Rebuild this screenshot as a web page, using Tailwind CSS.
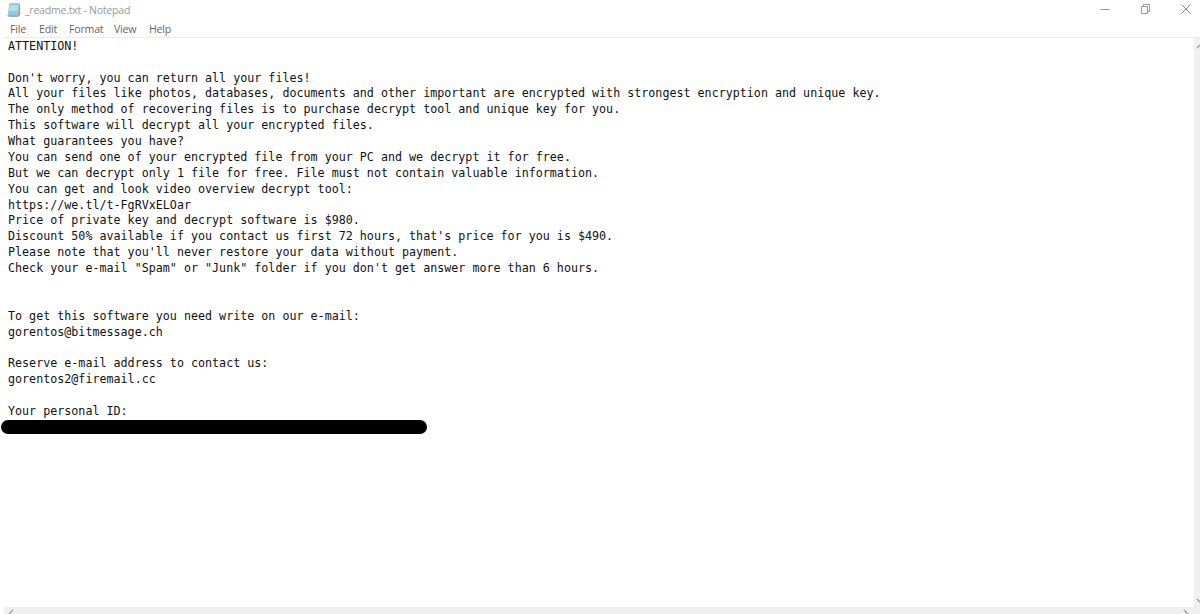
<!DOCTYPE html>
<html lang="en">
<head>
    <meta charset="UTF-8">
    <meta name="viewport" content="width=device-width, initial-scale=1.0">
    <title>_readme.txt - Notepad</title>
    <script src="https://cdn.jsdelivr.net/npm/@tailwindcss/browser@4"></script>
</head>
<body class="flex flex-col h-screen overflow-hidden bg-white font-['Open_Sans',sans-serif]">

    <!-- Title bar -->
    <header class="flex items-center justify-between h-5 pl-[7px] pr-[9px] shrink-0">
        <div class="flex items-center gap-[4px]">
            <svg class="w-[14px] h-[16px]" viewBox="0 0 14 16">
                <path d="M3 2 L13 2 L13.3 13 L11.5 14.8 L2 14.8 Z" fill="#a9a595"/>
                <path d="M2.5 1.5 H12.3 L10.8 14 H0.5 Z" fill="#8fcbdc"/>
                <path d="M3 3 H11.4 L10.6 9 H2.2 Z" fill="#b0deea"/>
                <path d="M2.5 1.7 H12.5" stroke="#9aa8ad" stroke-dasharray="1 1"/>
                <path d="M0.6 14 H10.8" stroke="#6c9db1" stroke-width="0.8"/>
            </svg>
            <span class="text-[10.6px] leading-5 tracking-[-0.27px] text-[#999] whitespace-nowrap">_readme.txt - Notepad</span>
        </div>
        <div class="flex items-center -mt-[2px]">
            <svg class="w-[10px] h-[10px] mr-[30px]" viewBox="0 0 10 10" fill="none" stroke="#999">
                <path d="M0.5 5.5 H9.5"/>
            </svg>
            <svg class="w-[10px] h-[10px] mr-[31px]" viewBox="0 0 10 10" fill="none" stroke="#999">
                <path d="M1.5 2.5 H7.5 V9.5 H1.5 Z M3.5 2.5 V0.5 H9.5 V7.5 H7.5"/>
            </svg>
            <svg class="w-[10px] h-[10px]" viewBox="0 0 10 10" fill="none" stroke="#888">
                <path d="M0.5 0.5 L9.5 9.5 M9.5 0.5 L0.5 9.5"/>
            </svg>
        </div>
    </header>

    <!-- Menu -->
    <nav class="flex h-[17px] pl-[10px] gap-[12px] text-[10.6px] leading-[18px] tracking-[-0.2px] text-[#666] shrink-0">
        <span class="w-[17px]">File</span>
        <span class="w-[18px]">Edit</span>
        <span class="w-[33px]">Format</span>
        <span class="w-[23px]">View</span>
        <span>Help</span>
    </nav>

    <!-- Text area and vertical scrollbar -->
    <div class="flex flex-1 min-h-0 ml-1 border-t border-[#ececec]">
        <main class="flex-1 pt-[0.8px] pl-1 font-['DejaVu_Sans_Mono',monospace] text-[11.7px] leading-[15.87px] text-[#111]">
<pre class="font-[inherit]">ATTENTION!

Don't worry, you can return all your files!
All your files like photos, databases, documents and other important are encrypted with strongest encryption and unique key.
The only method of recovering files is to purchase decrypt tool and unique key for you.
This software will decrypt all your encrypted files.
What guarantees you have?
You can send one of your encrypted file from your PC and we decrypt it for free.
But we can decrypt only 1 file for free. File must not contain valuable information.
You can get and look video overview decrypt tool:
https://we.tl/t-FgRVxELOar
Price of private key and decrypt software is $980.
Discount 50% available if you contact us first 72 hours, that's price for you is $490.
Please note that you'll never restore your data without payment.
Check your e-mail "Spam" or "Junk" folder if you don't get answer more than 6 hours.


To get this software you need write on our e-mail:
gorentos@bitmessage.ch

Reserve e-mail address to contact us:
gorentos2@firemail.cc

Your personal ID:
</pre>
            <div class="w-[426px] h-[14px] -ml-[7px] rounded-full bg-black"></div>
        </main>
        <div class="flex flex-col justify-between w-[6px] pt-[5px] pb-[3px] bg-[#f0f0f0] overflow-hidden">
            <svg class="w-[6px] h-[6px]" viewBox="0 0 6 6" fill="none" stroke="#a0a0a0" stroke-width="1.4">
                <path d="M3 5 L6.5 1.5"/>
            </svg>
            <svg class="w-[6px] h-[6px]" viewBox="0 0 6 6" fill="none" stroke="#a0a0a0" stroke-width="1.4">
                <path d="M3 1 L6.5 4.5"/>
            </svg>
        </div>
    </div>

    <!-- Horizontal scrollbar, cut off by the window edge -->
    <footer class="flex items-end justify-between h-[7px] ml-1 pl-[4px] pr-[11px] bg-[#f0f0f0] shrink-0">
        <svg class="w-[6px] h-[5px]" viewBox="0 0 6 5" fill="none" stroke="#a0a0a0" stroke-width="1.4">
            <path d="M1 5 L5 1"/>
        </svg>
        <svg class="w-[6px] h-[5px]" viewBox="0 0 6 5" fill="none" stroke="#a0a0a0" stroke-width="1.4">
            <path d="M1 1 L5 5"/>
        </svg>
    </footer>

</body>
</html>
